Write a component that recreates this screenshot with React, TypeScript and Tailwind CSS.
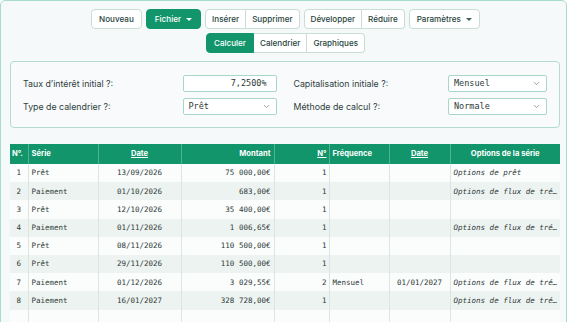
import { ChevronDown } from 'lucide-react';

const rows = [
  { n: 1, serie: 'Prêt', date: '13/09/2026', montant: '75 000,00€', nb: 1, freq: '', date2: '', options: 'Options de prêt' },
  { n: 2, serie: 'Paiement', date: '01/10/2026', montant: '683,00€', nb: 1, freq: '', date2: '', options: 'Options de flux de tré…' },
  { n: 3, serie: 'Prêt', date: '12/10/2026', montant: '35 400,00€', nb: 1, freq: '', date2: '', options: '' },
  { n: 4, serie: 'Paiement', date: '01/11/2026', montant: '1 006,65€', nb: 1, freq: '', date2: '', options: 'Options de flux de tré…' },
  { n: 5, serie: 'Prêt', date: '08/11/2026', montant: '110 500,00€', nb: 1, freq: '', date2: '', options: '' },
  { n: 6, serie: 'Prêt', date: '29/11/2026', montant: '110 500,00€', nb: 1, freq: '', date2: '', options: '' },
  { n: 7, serie: 'Paiement', date: '01/12/2026', montant: '3 029,55€', nb: 2, freq: 'Mensuel', date2: '01/01/2027', options: 'Options de flux de tré…' },
  { n: 8, serie: 'Paiement', date: '16/01/2027', montant: '328 728,00€', nb: 1, freq: '', date2: '', options: 'Options de flux de tré…' },
];

const btn = 'h-[20px] px-[6px] bg-white border border-[#c9ddd5] text-[#27443c] flex items-center';
const mono = { fontFamily: '"DejaVu Sans Mono", monospace' };

function Caret({ white }: { white?: boolean }) {
  return (
    <span
      className={`ml-[5px] inline-block w-0 h-0 border-x-[3px] border-t-[3px] border-x-transparent ${
        white ? 'border-t-white' : 'border-t-[#45605a]'
      }`}
    />
  );
}

function Select({ value, w }: { value: string; w: string }) {
  return (
    <div className={`${w} h-[17px] bg-white border border-[#a9d6c6] rounded-[2px] flex items-center justify-between px-[5px]`}>
      <span className="text-[8.5px] text-[#2b3b37]" style={mono}>{value}</span>
      <ChevronDown size={9} className="text-[#7a8a86]" />
    </div>
  );
}

export default function App() {
  return (
    <div className="w-[567px] h-[330px] border border-[#a5dccb] rounded-[5px] bg-[#f6f9fa] overflow-hidden" style={{ fontFamily: 'Inter, "Noto Sans", sans-serif' }}>
      {/* Toolbar */}
      <div className="flex flex-col items-center gap-[4px] pt-[8px] text-[8.1px] font-medium">
        <div className="flex gap-[4px] ml-[4px]">
          <button className={`${btn} rounded-[4px] px-[7px]`}>Nouveau</button>
          <button className="h-[20px] px-[8px] rounded-[4px] bg-[#12956a] border border-[#12956a] text-white flex items-center">
            Fichier <Caret white />
          </button>
          <div className="flex">
            <button className={`${btn} rounded-l-[4px]`}>Insérer</button>
            <button className={`${btn} rounded-r-[4px] border-l-0`}>Supprimer</button>
          </div>
          <div className="flex">
            <button className={`${btn} rounded-l-[4px]`}>Développer</button>
            <button className={`${btn} rounded-r-[4px] border-l-0`}>Réduire</button>
          </div>
          <button className={`${btn} rounded-[4px] px-[7px]`}>
            Paramètres <Caret />
          </button>
        </div>
        <div className="flex ml-[4px]">
          <button className="h-[20px] px-[7px] rounded-l-[4px] bg-[#12956a] border border-[#12956a] text-white">Calculer</button>
          <button className={`${btn} border-l-0`}>Calendrier</button>
          <button className={`${btn} rounded-r-[4px] border-l-0`}>Graphiques</button>
        </div>
      </div>

      {/* Settings */}
      <div className="ml-[9px] w-[550px] mt-[8px] border border-[#b3dccd] rounded-[4px] bg-[#f8fafb] px-[12px] pt-[13px] pb-[12px] grid grid-cols-2 gap-x-[17px] gap-y-[6px] text-[8.8px] text-[#2f3f3b]">
        <div className="flex items-center justify-between">
          <span>Taux d’intérêt initial ?:</span>
          <div className="w-[94px] h-[17px] bg-white border border-[#a9d6c6] rounded-[2px] flex items-center justify-end px-[9px]">
            <span className="text-[8.5px] text-[#2b3b37]" style={mono}>7,2500%</span>
          </div>
        </div>
        <div className="flex items-center justify-between">
          <span>Capitalisation initiale ?:</span>
          <Select value="Mensuel" w="w-[99px]" />
        </div>
        <div className="flex items-center justify-between">
          <span>Type de calendrier ?:</span>
          <Select value="Prêt" w="w-[94px]" />
        </div>
        <div className="flex items-center justify-between">
          <span>Méthode de calcul ?:</span>
          <Select value="Normale" w="w-[99px]" />
        </div>
      </div>

      {/* Table */}
      <table className="ml-[9px] mt-[16px] w-[550px] table-fixed border-collapse">
        <colgroup>
          <col className="w-[18px]" />
          <col className="w-[70px]" />
          <col className="w-[83px]" />
          <col className="w-[93px]" />
          <col className="w-[55px]" />
          <col className="w-[60px]" />
          <col className="w-[61px]" />
          <col className="w-[110px]" />
        </colgroup>
        <thead>
          <tr className="h-[20px] bg-[#12956a] text-white text-[7.6px] font-semibold">
            <th className="border-r border-[#4fb38f] px-[2px] text-left">N°.</th>
            <th className="border-r border-[#4fb38f] px-[3px] text-left">Série</th>
            <th className="border-r border-[#4fb38f] px-[3px] text-center underline">Date</th>
            <th className="border-r border-[#4fb38f] px-[3px] text-right">Montant</th>
            <th className="border-r border-[#4fb38f] px-[2px] text-right underline">N°</th>
            <th className="border-r border-[#4fb38f] px-[3px] text-left">Fréquence</th>
            <th className="border-r border-[#4fb38f] px-[3px] text-center underline">Date</th>
            <th className="px-[3px] text-center">Options de la série</th>
          </tr>
        </thead>
        <tbody className="text-[7.5px] text-[#2d3a37]" style={mono}>
          {rows.map((r) => (
            <tr key={r.n} className={`h-[18.2px] ${r.n % 2 === 0 ? 'bg-[#edf3f1]' : 'bg-[#fbfcfc]'}`}>
              <td className="border-r border-[#dbe6e2] text-center">{r.n}</td>
              <td className="border-r border-[#dbe6e2] px-[3px]">{r.serie}</td>
              <td className="border-r border-[#dbe6e2] text-center">{r.date}</td>
              <td className="border-r border-[#dbe6e2] px-[3px] text-right">{r.montant}</td>
              <td className="border-r border-[#dbe6e2] px-[2px] text-right">{r.nb}</td>
              <td className="border-r border-[#dbe6e2] px-[3px]">{r.freq}</td>
              <td className="border-r border-[#dbe6e2] text-center">{r.date2}</td>
              <td className="px-[3px] italic whitespace-nowrap overflow-hidden">{r.options}</td>
            </tr>
          ))}
          <tr className="h-[18px] bg-[#fbfcfc]">
            <td className="border-r border-[#dbe6e2]" />
            <td className="border-r border-[#dbe6e2]" />
            <td className="border-r border-[#dbe6e2]" />
            <td className="border-r border-[#dbe6e2]" />
            <td className="border-r border-[#dbe6e2]" />
            <td className="border-r border-[#dbe6e2]" />
            <td className="border-r border-[#dbe6e2]" />
            <td />
          </tr>
        </tbody>
      </table>
    </div>
  );
}
